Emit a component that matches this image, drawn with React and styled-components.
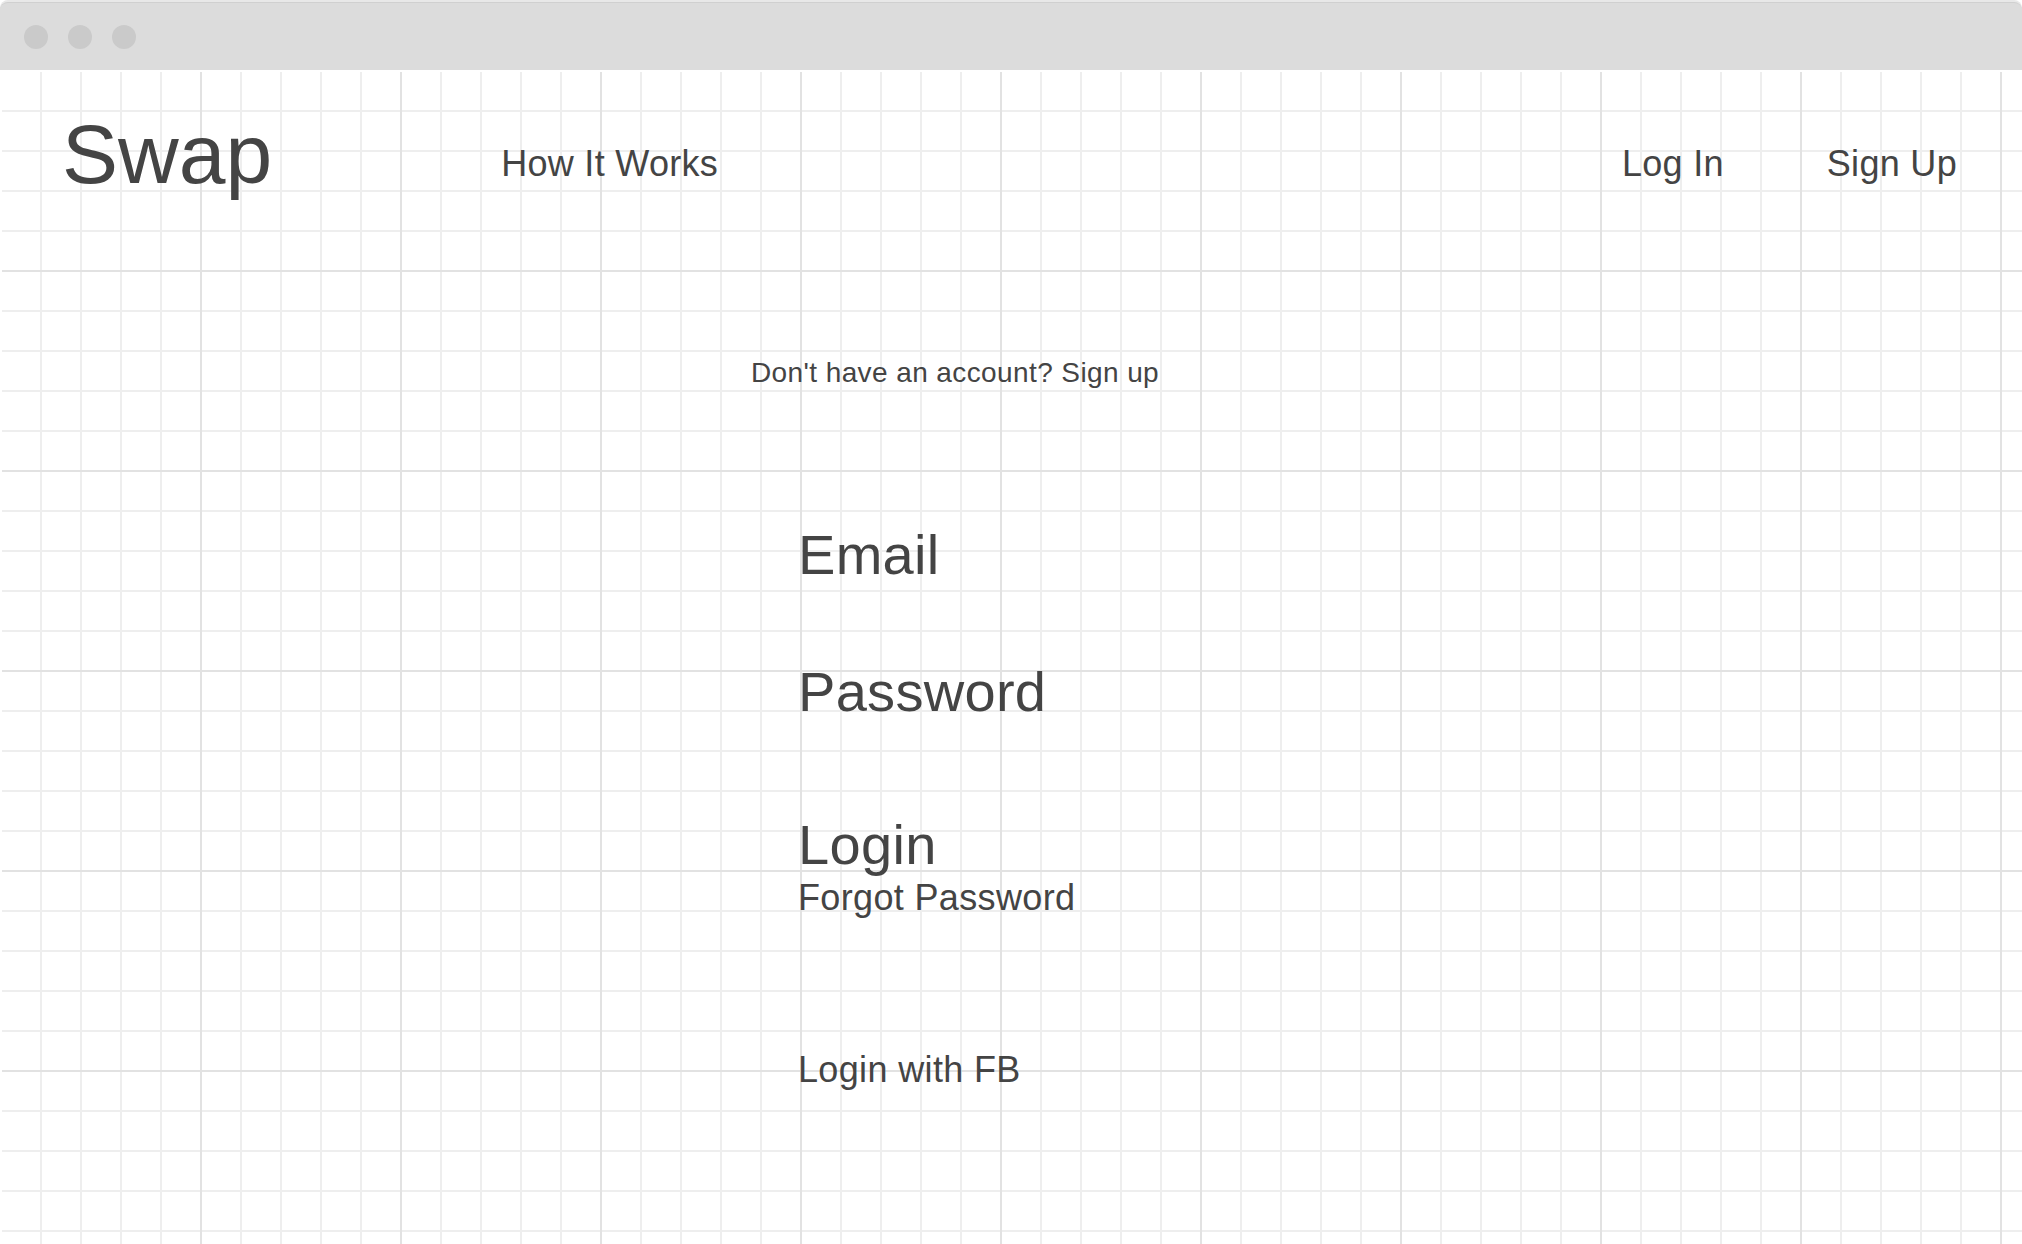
import React from "react";
import styled, { createGlobalStyle } from "styled-components";

const GlobalStyle = createGlobalStyle`
  html, body {
    margin: 0;
    padding: 0;
    background: #ffffff;
  }
  body {
    font-family: "Liberation Sans", Arial, sans-serif;
    color: #444444;
  }
  * { box-sizing: border-box; }
`;

const Window = styled.div`
  min-height: 100vh;
  display: flex;
  flex-direction: column;
  background: #ffffff;
`;

const TitleBar = styled.div`
  margin-top: 2px;
  height: 68px;
  display: flex;
  align-items: center;
  gap: 20px;
  padding-left: 24px;
  background: #dcdcdc;
  border-top: 1px solid #d0d0d0;
  border-radius: 8px 8px 0 0;
  box-shadow: 0 -2px 0 0 #e8e8e8;
`;

const Dot = styled.span`
  width: 24px;
  height: 24px;
  border-radius: 50%;
  background: #cacaca;
`;

const Canvas = styled.div`
  flex: 1;
  margin: 2px 0 0 2px;
  background-color: #ffffff;
  background-image:
    linear-gradient(to right, #e2e2e2 2px, transparent 2px),
    linear-gradient(to bottom, #e2e2e2 2px, transparent 2px),
    linear-gradient(to right, #eeeeee 2px, transparent 2px),
    linear-gradient(to bottom, #eeeeee 2px, transparent 2px);
  background-size: 200px 200px, 200px 200px, 40px 40px, 40px 40px;
  background-position: 198px 198px, 198px 198px, 38px 38px, 38px 38px;
  display: flex;
  flex-direction: column;
`;

const Header = styled.header`
  display: flex;
  align-items: flex-start;
  padding: 35px 65px 0 60px;
`;

const Logo = styled.div`
  font-size: 84px;
  line-height: 94px;
  font-weight: 400;
`;

const NavLink = styled.a`
  font-size: 36px;
  line-height: 40px;
  letter-spacing: 0.3px;
  margin-top: 37px;
  margin-left: ${(p) => p.$offset || 0}px;
  color: #444444;
  text-decoration: none;
  cursor: pointer;
`;

const Spacer = styled.div`
  flex: 1;
`;

const Main = styled.main`
  display: flex;
  flex-direction: column;
  align-items: flex-start;
  padding-left: 749px;
`;

const Prompt = styled.p`
  margin: 156px 0 0 0;
  font-size: 28px;
  line-height: 32px;
  letter-spacing: 0.4px;
`;

const Form = styled.form`
  display: flex;
  flex-direction: column;
  align-items: flex-start;
  margin: 134px 0 0 47px;
`;

const FieldLabel = styled.label`
  font-size: 56px;
  line-height: 64px;
  letter-spacing: 0.3px;
  margin-top: ${(p) => p.$gap || 0}px;
`;

const TextButton = styled.button`
  border: none;
  background: none;
  padding: 0;
  font-family: inherit;
  color: #444444;
  text-align: left;
  cursor: pointer;
  letter-spacing: 0.35px;
  font-size: ${(p) => p.$size}px;
  line-height: ${(p) => p.$lh}px;
  margin-top: ${(p) => p.$gap || 0}px;
`;

export default function App() {
  return (
    <>
      <GlobalStyle />
      <Window>
        <TitleBar>
          <Dot />
          <Dot />
          <Dot />
        </TitleBar>
        <Canvas>
          <Header>
            <Logo>Swap</Logo>
            <NavLink $offset={229}>How It Works</NavLink>
            <Spacer />
            <NavLink>Log In</NavLink>
            <NavLink $offset={103}>Sign Up</NavLink>
          </Header>
          <Main>
            <Prompt>Don't have an account? Sign up</Prompt>
            <Form onSubmit={(e) => e.preventDefault()}>
              <FieldLabel>Email</FieldLabel>
              <FieldLabel $gap={73}>Password</FieldLabel>
              <TextButton type="submit" $size={56} $lh={62} $gap={90}>
                Login
              </TextButton>
              <TextButton type="button" $size={36} $lh={40} $gap={2}>
                Forgot Password
              </TextButton>
              <TextButton type="button" $size={36} $lh={40} $gap={132}>
                Login with FB
              </TextButton>
            </Form>
          </Main>
        </Canvas>
      </Window>
    </>
  );
}
